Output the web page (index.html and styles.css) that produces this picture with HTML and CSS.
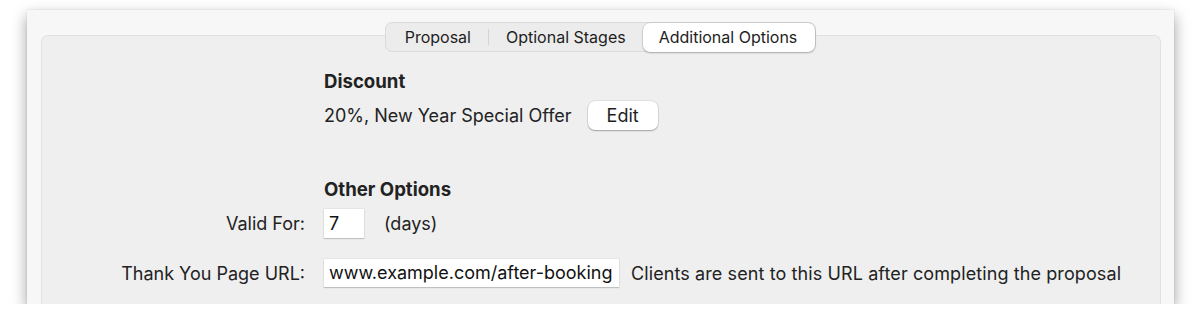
FILE: index.html
```html
<!DOCTYPE html>
<html>
<head>
<meta charset="utf-8">
<link rel="stylesheet" href="styles.css">
</head>
<body>
<div class="window">
  <div class="segmented">
    <div class="seg">Proposal</div>
    <div class="sep"></div>
    <div class="seg">Optional Stages</div>
    <div class="seg active">Additional Options</div>
  </div>
  <div class="panel">
    <div class="row heading-row">
      <div class="label"></div>
      <div class="heading">Discount</div>
    </div>
    <div class="row discount-row">
      <div class="label"></div>
      <div class="value">20%, New Year Special Offer</div>
      <button class="btn">Edit</button>
    </div>
    <div class="row heading-row other">
      <div class="label"></div>
      <div class="heading">Other Options</div>
    </div>
    <div class="row valid-row">
      <div class="label">Valid For:</div>
      <div class="input small">7</div>
      <div class="note days">(days)</div>
    </div>
    <div class="row url-row">
      <div class="label">Thank You Page URL:</div>
      <div class="input url">www.example.com/after-booking</div>
      <div class="note help">Clients are sent to this URL after completing the proposal</div>
    </div>
  </div>
</div>
</body>
</html>
```
FILE: styles.css
```css
html, body {
  margin: 0;
  padding: 0;
  background: #ffffff;
}
body {
  font-family: Inter, "Noto Sans", sans-serif;
  font-size: 18px;
  color: #222222;
}
.window {
  margin: 10px 0 0 27px;
  width: 1147px;
  height: 294px;
  background: #f7f7f7;
  box-shadow: 0 6px 14px rgba(0, 0, 0, 0.38), 0 0 1px rgba(0,0,0,0.2);
  display: flex;
  flex-direction: column;
  padding-top: 12px;
  box-sizing: border-box;
}
.segmented {
  position: relative;
  z-index: 2;
  align-self: center;
  display: flex;
  align-items: center;
  height: 30px;
  box-sizing: border-box;
  background: #ececec;
  border: 1px solid #dadada;
  border-radius: 7px;
  padding: 0;
  font-size: 16px;
}
.seg {
  padding: 0 17px;
  line-height: 28px;
  color: #1e1e1e;
}
.seg:first-child {
  padding: 0 17px 0 19px;
}
.sep {
  width: 1px;
  height: 16px;
  background: #d4d4d4;
}
.seg.active {
  background: #ffffff;
  border-radius: 7px;
  box-shadow: 0 1px 2px rgba(0,0,0,0.25), 0 0 0 0.5px rgba(0,0,0,0.12);
  padding: 0 18px 0 16px;
  margin-left: 0;
  line-height: 29px;
}
.panel {
  margin: -17px 13px 0 14px;
  flex: 1;
  background: #efefef;
  border: 1px solid #e2e2e2;
  border-bottom: none;
  border-radius: 7px 7px 0 0;
  padding-top: 35px;
  display: flex;
  flex-direction: column;
}
.row {
  display: flex;
  align-items: center;
}
.label {
  width: 263px;
  flex: none;
  text-align: right;
  margin-right: 19px;
  color: #222;
}
.heading {
  font-weight: 700;
  font-size: 18.6px;
  line-height: 20px;
}
.heading-row {
  height: 20px;
}
.discount-row {
  margin-top: 10px;
  height: 29px;
}
.btn {
  font: inherit;
  color: #1e1e1e;
  margin-left: 16px;
  width: 70px;
  height: 29px;
  background: #ffffff;
  border: none;
  border-radius: 7px;
  box-shadow: 0 1px 1.5px rgba(0,0,0,0.28), 0 0 0 0.5px rgba(0,0,0,0.12);
  padding: 0;
}
.other {
  margin-top: 49px;
}
.valid-row {
  margin-top: 10px;
  height: 29px;
}
.input {
  background: #ffffff;
  border: none;
  box-shadow: 0 1px 1px rgba(0,0,0,0.16), 0 0 0 0.5px rgba(0,0,0,0.08);
  box-sizing: border-box;
  padding: 0 5px;
  line-height: 29px;
  color: #111;
}
.input.small {
  width: 40px;
  height: 29px;
}
.input.url {
  width: 295px;
  height: 28px;
  line-height: 28px;
}
.note.days {
  margin-left: 20px;
}
.note.help {
  margin-left: 12px;
  letter-spacing: 0.1px;
}
.url-row {
  margin-top: 21px;
  height: 28px;
}
```
